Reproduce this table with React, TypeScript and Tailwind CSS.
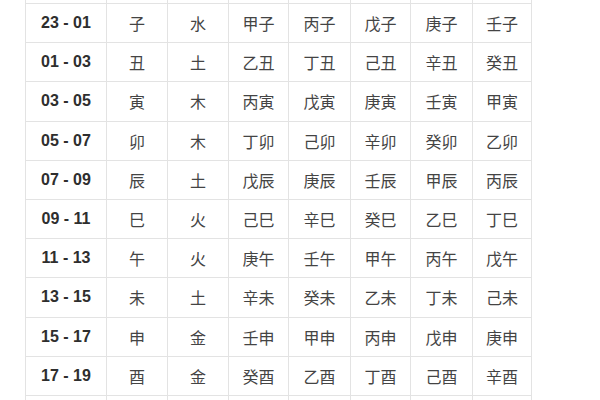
import React from "react";

const rows: string[][] = [
  ["23 - 01", "子", "水", "甲子", "丙子", "戊子", "庚子", "壬子"],
  ["01 - 03", "丑", "土", "乙丑", "丁丑", "己丑", "辛丑", "癸丑"],
  ["03 - 05", "寅", "木", "丙寅", "戊寅", "庚寅", "壬寅", "甲寅"],
  ["05 - 07", "卯", "木", "丁卯", "己卯", "辛卯", "癸卯", "乙卯"],
  ["07 - 09", "辰", "土", "戊辰", "庚辰", "壬辰", "甲辰", "丙辰"],
  ["09 - 11", "巳", "火", "己巳", "辛巳", "癸巳", "乙巳", "丁巳"],
  ["11 - 13", "午", "火", "庚午", "壬午", "甲午", "丙午", "戊午"],
  ["13 - 15", "未", "土", "辛未", "癸未", "乙未", "丁未", "己未"],
  ["15 - 17", "申", "金", "壬申", "甲申", "丙申", "戊申", "庚申"],
  ["17 - 19", "酉", "金", "癸酉", "乙酉", "丁酉", "己酉", "辛酉"],
  ["", "", "", "", "", "", "", ""],
];

const cols = "grid grid-cols-[81px_61px_61px_60px_62px_60px_62px_59px]";

export default function App() {
  return (
    <div className="w-[600px] h-[400px] overflow-hidden bg-white pl-[25px]">
      <div className="w-[507px] border-l border-[#e3e3e3]">
        <div className={`${cols} h-[4px] border-b border-[#e3e3e3]`}>
          {Array.from({ length: 8 }).map((_, i) => (
            <div key={i} className="border-r border-[#e3e3e3]" />
          ))}
        </div>
        {rows.map((r, ri) => (
          <div key={ri} className={`${cols} h-[39.2px] border-b border-[#e3e3e3]`}>
            {r.map((c, ci) => (
              <div
                key={ci}
                className={
                  ci === 0
                    ? "flex items-center justify-center border-r border-[#e3e3e3] font-['Liberation_Sans',Arial,sans-serif] font-bold text-[16px] text-[#2e2e2e]"
                    : "flex items-center justify-center border-r border-[#e3e3e3] font-['Noto_Sans_CJK_SC','Noto_Sans',sans-serif] text-[16px] text-[#444444]"
                }
              >
                {c}
              </div>
            ))}
          </div>
        ))}
      </div>
    </div>
  );
}
